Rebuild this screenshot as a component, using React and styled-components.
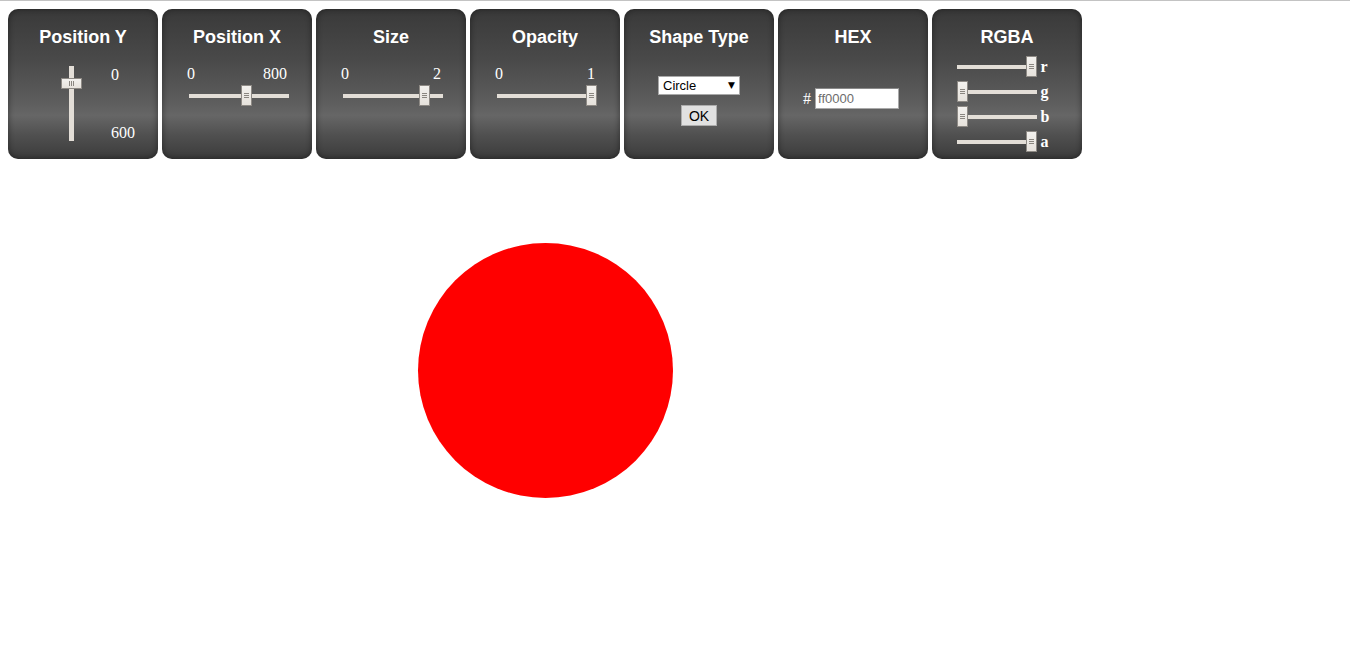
import React, { useState } from 'react';
import styled, { createGlobalStyle } from 'styled-components';

const GlobalStyle = createGlobalStyle`
  html, body {
    margin: 0;
    padding: 0;
    background: #ffffff;
  }
  body {
    border-top: 1px solid #c3c3c3;
    font-family: "Liberation Serif", "Times New Roman", serif;
  }
`;

const Page = styled.div`
  padding: 8px;
`;

const Toolbar = styled.div`
  display: flex;
  gap: 4px;
`;

const Panel = styled.div`
  width: 150px;
  height: 150px;
  box-sizing: border-box;
  border-radius: 10px;
  display: flex;
  flex-direction: column;
  align-items: center;
  background: linear-gradient(
    to bottom,
    #393939 0%,
    #4a4a4a 35%,
    #5d5d5d 62%,
    #666666 71%,
    #505050 84%,
    #3b3b3b 100%
  );
  box-shadow: inset 0 0 6px rgba(0, 0, 0, 0.45);
  color: #ffffff;
`;

const Title = styled.div`
  margin-top: 18px;
  height: 20px;
  line-height: 20px;
  font-family: "Liberation Sans", Arial, sans-serif;
  font-weight: bold;
  font-size: 18px;
  color: #ffffff;
  white-space: nowrap;
`;

const Labels = styled.div`
  width: ${p => p.$width || 100}px;
  margin-top: 18px;
  display: flex;
  justify-content: space-between;
  font-size: 16px;
  line-height: 18px;
  padding-left: ${p => p.$shift || 0}px;
  box-sizing: border-box;
`;

const HSliderWrap = styled.div`
  position: relative;
  width: ${p => p.$width}px;
  height: 21px;
  margin-top: ${p => p.$top ?? 2}px;
  margin-left: ${p => p.$shift ?? 0}px;
  display: flex;
  align-items: center;
  flex-shrink: 0;
`;

const HBar = styled.div`
  width: 100%;
  height: 4px;
  background: #e3ded7;
`;

const VSliderWrap = styled.div`
  position: relative;
  width: 21px;
  height: 75px;
  display: flex;
  justify-content: center;
`;

const VBar = styled.div`
  width: 5px;
  height: 100%;
  background: #e3ded7;
`;

const Thumb = styled.div`
  position: absolute;
  box-sizing: border-box;
  width: ${p => (p.$vertical ? 21 : 11)}px;
  height: ${p => (p.$vertical ? 11 : 21)}px;
  ${p => (p.$vertical ? 'left: 0;' : 'top: 0;')}
  background: linear-gradient(to bottom, #f3f1ee, #e6e2dc);
  border: 1px solid #8e8a85;
  display: flex;
  align-items: center;
  justify-content: center;
`;

const Grip = styled.div`
  display: flex;
  flex-direction: ${p => (p.$vertical ? 'row' : 'column')};
  gap: 1px;
  & > span {
    display: block;
    background: #8a8680;
    width: ${p => (p.$vertical ? 1 : 5)}px;
    height: ${p => (p.$vertical ? 5 : 1)}px;
  }
`;

const HSlider = ({ value, min, max, width = 100, top, shift }) => {
  const left = Math.round(((value - min) / (max - min)) * (width - 11));
  return (
    <HSliderWrap $width={width} $top={top} $shift={shift}>
      <HBar />
      <Thumb style={{ left }}>
        <Grip>
          <span />
          <span />
          <span />
        </Grip>
      </Thumb>
    </HSliderWrap>
  );
};

const VSlider = ({ value, min, max }) => {
  const top = Math.round(((value - min) / (max - min)) * (75 - 11));
  return (
    <VSliderWrap>
      <VBar />
      <Thumb $vertical style={{ top }}>
        <Grip $vertical>
          <span />
          <span />
          <span />
        </Grip>
      </Thumb>
    </VSliderWrap>
  );
};

const VRow = styled.div`
  align-self: stretch;
  margin-top: 19px;
  padding-left: 53px;
  display: flex;
`;

const VLabels = styled.div`
  margin-left: 29px;
  display: flex;
  flex-direction: column;
  justify-content: space-between;
  font-size: 16px;
  line-height: 18px;
  height: 76px;
`;

const SelectWrap = styled.div`
  position: relative;
  margin-top: 29px;
  width: 82px;
  height: 19px;
  &::after {
    content: '▼';
    position: absolute;
    right: 5px;
    top: 3px;
    font-size: 9px;
    line-height: 12px;
    color: #000;
    pointer-events: none;
    font-family: "DejaVu Sans", sans-serif;
  }
`;

const Select = styled.select`
  appearance: none;
  -webkit-appearance: none;
  width: 100%;
  height: 100%;
  box-sizing: border-box;
  margin: 0;
  padding: 0 4px;
  border: 1px solid #a9a9a9;
  border-radius: 0;
  background: #ffffff;
  font-family: "Liberation Sans", Arial, sans-serif;
  font-size: 13px;
  color: #000;
  outline: none;
`;

const OkButton = styled.button`
  margin-top: 10px;
  width: 36px;
  height: 21px;
  padding: 0;
  box-sizing: border-box;
  border: 1px solid #adadad;
  border-radius: 0;
  background: #e1e1e1;
  font-family: "Liberation Sans", Arial, sans-serif;
  font-size: 14px;
  color: #000;
`;

const HexRow = styled.div`
  margin-top: 41px;
  margin-left: -4px;
  display: flex;
  align-items: center;
  gap: 4px;
  font-size: 16px;
`;

const HexInput = styled.input`
  width: 84px;
  height: 21px;
  box-sizing: border-box;
  margin: 0;
  padding: 0 2px;
  border: 1px solid #a9a9a9;
  border-top-color: #8a8a8a;
  background: #ffffff;
  font-family: "Liberation Sans", Arial, sans-serif;
  font-size: 13px;
  color: #6d6d6d;
  outline: none;
`;

const RgbaList = styled.div`
  margin-top: 9px;
  margin-left: -8px;
  display: flex;
  flex-direction: column;
  gap: 4px;
`;

const RgbaRow = styled.div`
  display: flex;
  align-items: center;
  gap: 4px;
`;

const Channel = styled.span`
  font-size: 16px;
  font-weight: bold;
  line-height: 18px;
`;

const Canvas = styled.div`
  position: relative;
  height: 470px;
`;

const Shape = styled.div`
  position: absolute;
  width: ${p => p.$size}px;
  height: ${p => p.$size}px;
  border-radius: ${p => (p.$type === 'Circle' ? '50%' : '0')};
  background: ${p => p.$color};
`;

const channels = [
  ['r', 255, 255],
  ['g', 0, 255],
  ['b', 0, 255],
  ['a', 1, 1],
];

const App = () => {
  const [shape, setShape] = useState('Circle');
  const [hex, setHex] = useState('ff0000');

  return (
    <>
      <GlobalStyle />
      <Page>
        <Toolbar>
          <Panel>
            <Title>Position Y</Title>
            <VRow>
              <VSlider value={112} min={0} max={600} />
              <VLabels>
                <span>0</span>
                <span>600</span>
              </VLabels>
            </VRow>
          </Panel>

          <Panel>
            <Title>Position X</Title>
            <Labels $shift={-2}>
              <span>0</span>
              <span>800</span>
            </Labels>
            <HSlider value={468} min={0} max={800} shift={4} />
          </Panel>

          <Panel>
            <Title>Size</Title>
            <Labels $shift={-2}>
              <span>0</span>
              <span>2</span>
            </Labels>
            <HSlider value={1.71} min={0} max={2} shift={4} />
          </Panel>

          <Panel>
            <Title>Opacity</Title>
            <Labels $shift={-2}>
              <span>0</span>
              <span>1</span>
            </Labels>
            <HSlider value={1} min={0} max={1} shift={4} />
          </Panel>

          <Panel>
            <Title>Shape Type</Title>
            <SelectWrap>
              <Select value={shape} onChange={e => setShape(e.target.value)}>
                <option>Circle</option>
                <option>Square</option>
              </Select>
            </SelectWrap>
            <OkButton>OK</OkButton>
          </Panel>

          <Panel>
            <Title>HEX</Title>
            <HexRow>
              <span>#</span>
              <HexInput value={hex} onChange={e => setHex(e.target.value)} />
            </HexRow>
          </Panel>

          <Panel>
            <Title>RGBA</Title>
            <RgbaList>
              {channels.map(([name, value, max]) => (
                <RgbaRow key={name}>
                  <HSlider value={value} min={0} max={max} width={80} top={0} />
                  <Channel>{name}</Channel>
                </RgbaRow>
              ))}
            </RgbaList>
          </Panel>
        </Toolbar>

        <Canvas>
          <Shape
            $type={shape}
            $size={255}
            $color={'#' + hex}
            style={{ left: 410, top: 84 }}
          />
        </Canvas>
      </Page>
    </>
  );
};

export default App;
